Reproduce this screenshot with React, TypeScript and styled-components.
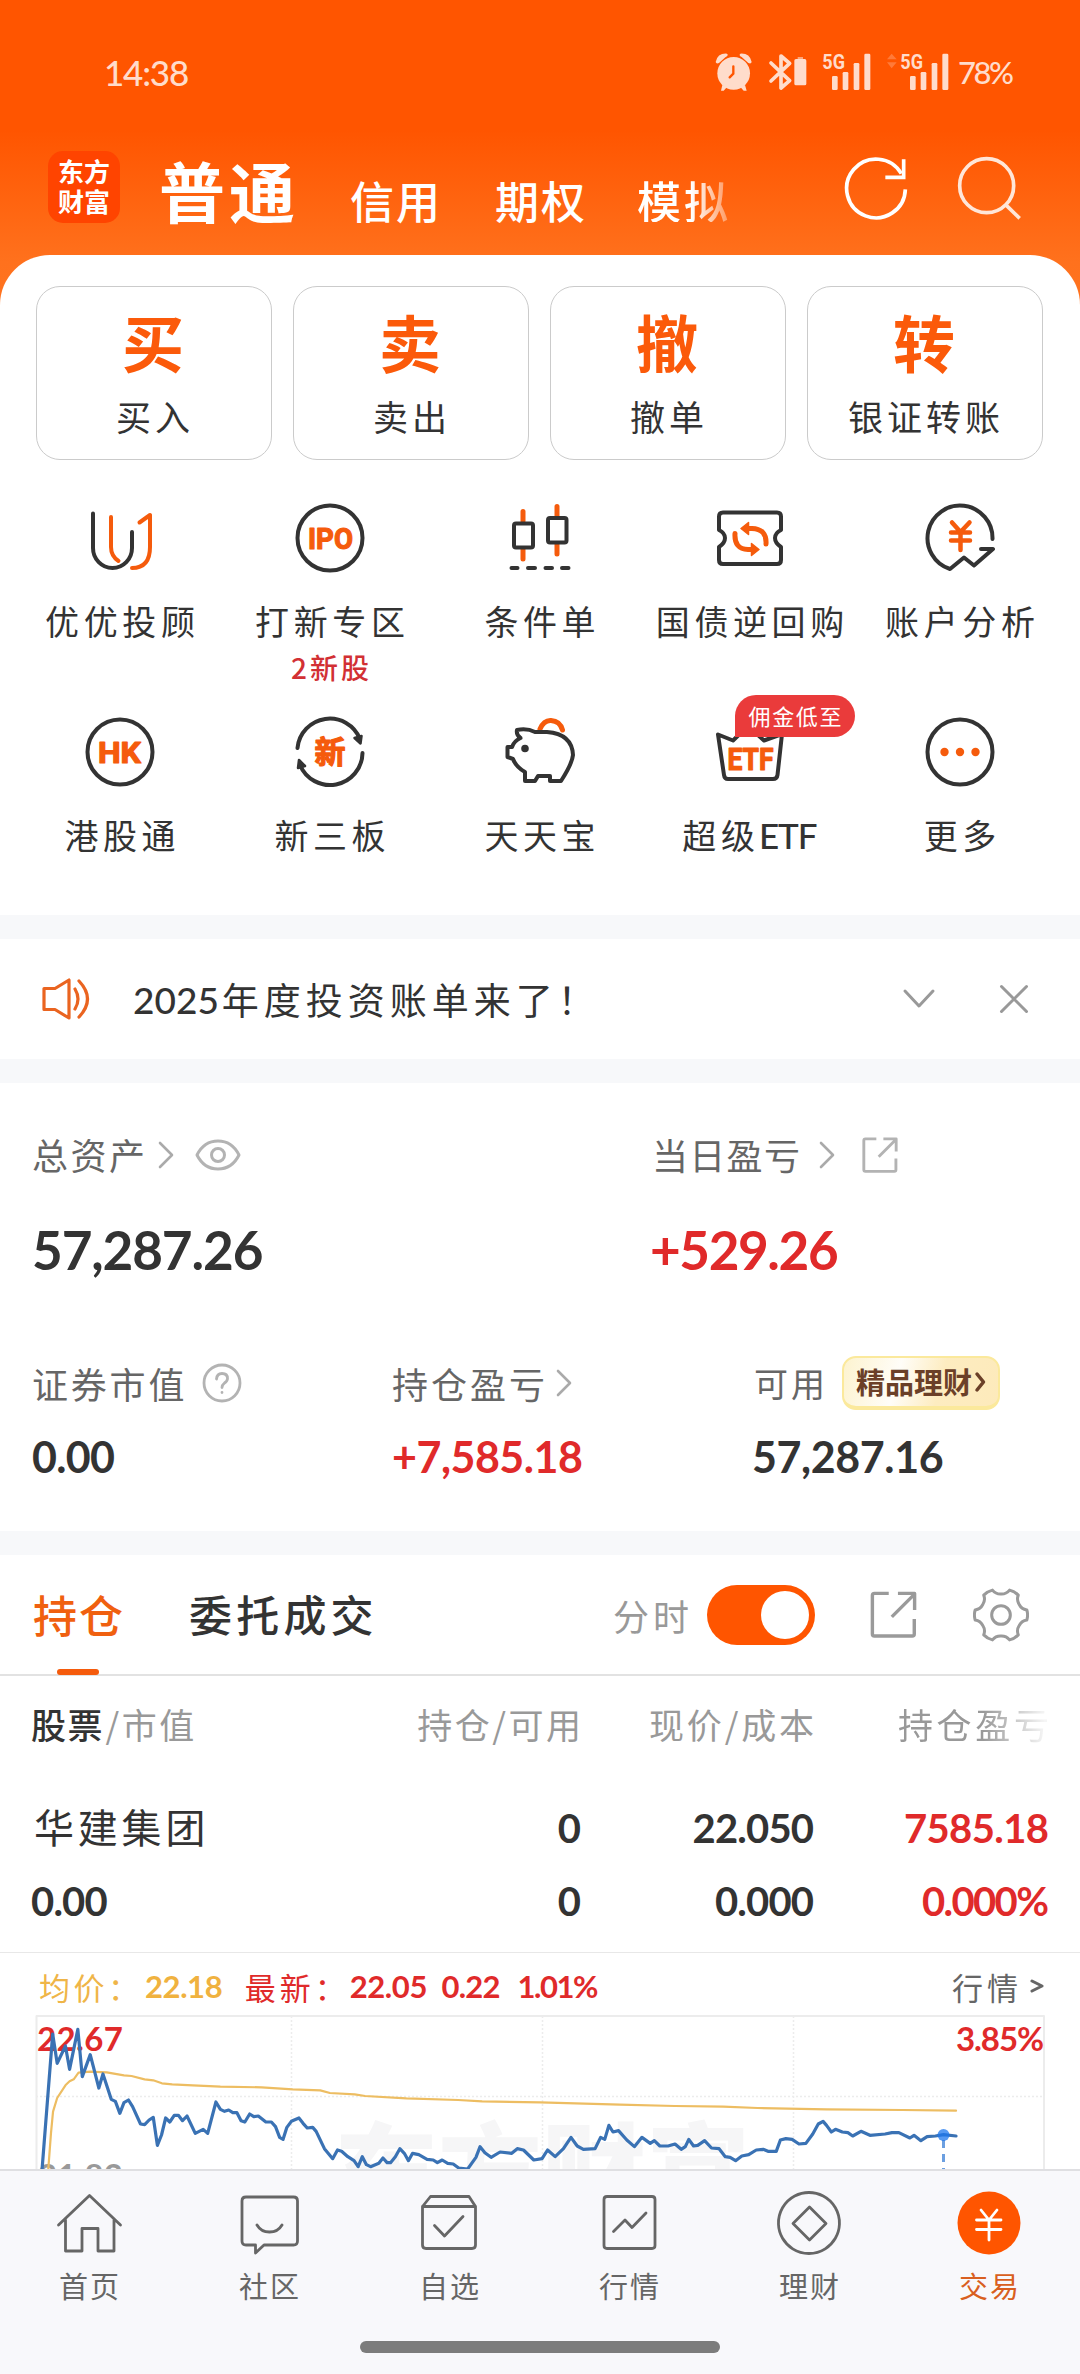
import React from "react";
import styled, { createGlobalStyle, css } from "styled-components";

const CJK = `"Noto Sans CJK SC", sans-serif`;
const NUM = `Lato, "Noto Sans CJK SC", sans-serif`;
const ORANGE = "#ff5500";
const ICON_ORANGE = "#f55b0c";
const INK = "#333333";
const RED = "#e02a2a";

const GlobalStyle = createGlobalStyle`
  * { box-sizing: border-box; }
  body { margin: 0; background: #fff; }
`;

const Page = styled.div`
  width: 1080px;
  height: 2374px;
  overflow: hidden;
  display: flex;
  flex-direction: column;
  font-family: ${CJK};
  color: ${INK};
  background: linear-gradient(180deg, #ff5500 0, #ff5500 130px, #ff711d 262px, #ff7420 320px) no-repeat;
`;

interface TextProps {
  $size: number;
  $gap?: number;
  $color?: string;
  $weight?: number;
  $dy?: number;
}

const textBase = css<TextProps>`
  display: inline-block;
  white-space: nowrap;
  line-height: 1;
  font-size: ${(p) => p.$size}px;
  letter-spacing: ${(p) => p.$gap ?? 0}px;
  margin-right: ${(p) => -(p.$gap ?? 0)}px;
  color: ${(p) => p.$color ?? INK};
  padding-bottom: ${(p) => p.$dy ?? 0}px;
`;

const Label = styled.span<TextProps>`
  ${textBase}
  font-family: ${CJK};
  font-weight: ${(p) => p.$weight ?? 400};
`;

const Num = styled.span<TextProps>`
  ${textBase}
  font-family: ${NUM};
  font-weight: ${(p) => p.$weight ?? 700};
`;

/* ---------- header ---------- */

const StatusBar = styled.div`
  height: 144px;
  flex: none;
  display: flex;
  align-items: center;
  justify-content: space-between;
  padding: 0 66px 0 104px;
`;

const StatusRight = styled.div`
  display: flex;
  align-items: center;
  gap: 9px;
`;

const NavBar = styled.div`
  height: 111px;
  flex: none;
  display: flex;
  align-items: flex-start;
  padding: 7px 0 0 48px;
`;

const Logo = styled.div`
  width: 72px;
  height: 72px;
  border-radius: 15px;
  background: #ff4400;
  display: flex;
  flex-direction: column;
  align-items: center;
  justify-content: center;
  gap: 4px;
  padding-bottom: 3px;
`;

const NavTab = styled.div<{ $left: number; $top: number; $fade?: boolean }>`
  margin-left: ${(p) => p.$left}px;
  margin-top: ${(p) => p.$top}px;
  display: flex;
  ${(p) => p.$fade && css`mask-image: linear-gradient(90deg, #000 60%, rgba(0,0,0,.35) 100%);`}
`;

const NavIcons = styled.div`
  display: flex;
  gap: 49px;
  margin-left: auto;
  padding: 5px 59px 0 0;
`;

/* ---------- white sheet with shortcuts ---------- */

const Sheet = styled.div`
  flex: none;
  height: 660px;
  background: #fff;
  border-radius: 50px 50px 0 0;
  padding-top: 31px;
`;

const Cards = styled.div`
  display: grid;
  grid-template-columns: repeat(4, 1fr);
  gap: 21px;
  padding: 0 37px 0 36px;
`;

const Card = styled.div`
  height: 174px;
  border: 1.5px solid #cbcbcb;
  border-radius: 24px;
  display: flex;
  flex-direction: column;
  align-items: center;
  padding: 23px 2px 0 0;
  gap: 26px;
`;

const Shortcuts = styled.div`
  margin-top: 42px;
  padding: 0 15px;
  display: grid;
  grid-template-columns: repeat(5, 210px);
  grid-auto-rows: 214px;
`;

const Shortcut = styled.div`
  position: relative;
  display: flex;
  flex-direction: column;
  align-items: center;
`;

const ShortcutName = styled.div`
  margin-top: 27px;
  height: 40px;
  display: flex;
  align-items: center;
`;

const ShortcutNote = styled.div`
  margin-top: 11px;
  height: 30px;
  display: flex;
  align-items: center;
`;

const Badge = styled.div`
  position: absolute;
  left: 90px;
  top: -21px;
  width: 120px;
  height: 42px;
  border-radius: 21px 21px 21px 0;
  background: #ea3b3b;
  display: flex;
  align-items: center;
  justify-content: center;
`;

const Divider = styled.div`
  height: 24px;
  flex: none;
  background: #f7f8fa;
`;

/* ---------- notice ---------- */

const Notice = styled.div`
  height: 120px;
  flex: none;
  background: #fff;
  display: flex;
  align-items: center;
  padding: 0 51px 0 41px;
`;

const NoticeText = styled.div`
  display: flex;
  align-items: center;
  gap: 3px;
  margin-left: 42px;
  flex: 1;
`;

/* ---------- assets ---------- */

const Assets = styled.div`
  height: 448px;
  flex: none;
  background: #fff;
  padding: 52px 0 0 32px;
`;

const AssetGrid = styled.div<{ $cols: string; $top?: number }>`
  display: grid;
  grid-template-columns: ${(p) => p.$cols};
  margin-top: ${(p) => p.$top ?? 0}px;
`;

const AssetHead = styled.div`
  height: 40px;
  display: flex;
  align-items: center;
`;

const AssetValue = styled.div<{ $top: number; $height: number }>`
  margin-top: ${(p) => p.$top}px;
  height: ${(p) => p.$height}px;
  display: flex;
  align-items: center;
`;

const Promo = styled.div`
  margin-left: 17px;
  width: 158px;
  height: 54px;
  border-radius: 14px;
  border: 2px solid #fbe99c;
  border-bottom-width: 4px;
  background: linear-gradient(105deg, #fdf3cf 0, #fffdf8 35%, #fdecc0 62%, #fdeabb 100%);
  display: flex;
  align-items: center;
  justify-content: center;
  gap: 2px;
`;

/* ---------- positions ---------- */

const PositionTabs = styled.div`
  height: 121px;
  flex: none;
  background: #fff;
  border-bottom: 2px solid #e2e2e2;
  display: flex;
  align-items: center;
  padding: 0 51px 0 33px;
`;

const PositionTab = styled.div<{ $active?: boolean }>`
  height: 120px;
  display: flex;
  flex-direction: column;
  align-items: center;
  padding-top: 37px;
  margin-right: 66px;
  &::after {
    content: "";
    margin-top: auto;
    width: 42px;
    height: 6px;
    border-radius: 3px;
    background: ${(p) => (p.$active ? "#f55b0c" : "transparent")};
  }
`;

const TabTools = styled.div`
  margin-left: auto;
  display: flex;
  align-items: center;
`;

const Toggle = styled.div`
  width: 108px;
  height: 60px;
  margin: 0 55px 0 18px;
  border-radius: 30px;
  background: ${ORANGE};
  padding: 6px;
  display: flex;
  justify-content: flex-end;
  &::after {
    content: "";
    width: 48px;
    height: 48px;
    border-radius: 50%;
    background: #fff;
  }
`;

const TableRow = styled.div<{ $height: number; $top?: number; $bottom?: number }>`
  flex: none;
  height: ${(p) => p.$height}px;
  padding: ${(p) => p.$top ?? 0}px 0 ${(p) => p.$bottom ?? 0}px 31px;
  background: #fff;
  display: grid;
  grid-template-columns: 300px 250px 233px 235px;
  align-items: center;
`;

const Cell = styled.div<{ $right?: boolean; $fade?: boolean }>`
  display: flex;
  align-items: center;
  justify-content: ${(p) => (p.$right ? "flex-end" : "flex-start")};
  ${(p) => p.$fade && css`mask-image: linear-gradient(90deg, #000 72%, rgba(0,0,0,.1) 98%);`}
`;

const Legend = styled.div`
  height: 62px;
  flex: none;
  background: #fff;
  border-top: 1.5px solid #e8e8e8;
  padding: 5px 36px 0 39px;
  display: flex;
  align-items: center;
`;

const Spacer = styled.div<{ $w?: number }>`
  width: ${(p) => (p.$w ? `${p.$w}px` : "auto")};
  flex: ${(p) => (p.$w ? "none" : "1")};
`;

const ChartBox = styled.div`
  height: 155px;
  flex: none;
  background: #fff;
  overflow: hidden;
`;

/* ---------- bottom bar ---------- */

const TabBar = styled.div`
  height: 205px;
  flex: none;
  background: #f8f8fb;
  border-top: 2px solid #dfdfe2;
  display: flex;
  flex-direction: column;
  align-items: center;
`;

const TabItems = styled.div`
  display: grid;
  grid-template-columns: repeat(6, 180px);
  height: 170px;
  width: 1080px;
`;

const TabItem = styled.div`
  display: flex;
  flex-direction: column;
  align-items: center;
  padding: 16px 2px 0 0;
  gap: 12px;
`;

const HomeHandle = styled.div`
  width: 360px;
  height: 12px;
  border-radius: 6px;
  background: #7c7c7c;
`;

/* ---------- drawings ---------- */

const Glyph = styled.svg<{ $w: number; $h: number }>`
  display: block;
  flex: none;
  width: ${(p) => p.$w}px;
  height: ${(p) => p.$h}px;
  fill: none;
  stroke-linecap: round;
  stroke-linejoin: round;
`;

const StatusIcons = () => (
  <Glyph $w={234} $h={42} viewBox="50 30 702 126">
    <g fill="#ffdccb">
      <circle cx="106" cy="97" r="49" />
      <path d="M52 63Q58 36 86 38Q92 42 82 48L62 66Q54 70 52 63zM160 63Q154 36 126 38Q120 42 130 48L150 66Q158 70 160 63z" />
      <path d="M72 132L68 149H76L86 138zM140 132L145 149H136L126 138z" />
      <rect x="288" y="54" width="36" height="79" rx="5" />
      <rect x="298" y="48" width="16" height="8" opacity=".6" />
      {[0, 234].map((dx) => (
        <g key={dx} transform={`translate(${dx} 0)`}>
          <rect x="401" y="105" width="17" height="42" rx="4" />
          <rect x="433" y="93" width="17" height="54" rx="4" />
          <rect x="466" y="66" width="17" height="81" rx="4" />
          <rect x="498" y="38" width="18" height="109" rx="4" />
          <text x="372" y="83" fontFamily="Roboto, sans-serif" fontWeight="700" fontSize="62" textLength="68" lengthAdjust="spacingAndGlyphs">5G</text>
        </g>
      ))}
      <path d="M566 55L580 38L595 55zM566 64H595L580 82z" opacity=".28" />
    </g>
    <path d="M105 76V98L94 109" stroke="#ff5500" strokeWidth="7" />
    <path d="M218 66L274 119L248 141V45L274 67L218 120" stroke="#ffdccb" strokeWidth="11" />
  </Glyph>
);

const RefreshIcon = () => (
  <Glyph $w={64} $h={64} viewBox="432 347 192 192" stroke="#fff" strokeWidth="11">
    <path d="M616 447A88 88 0 1 1 604 400" strokeLinecap="butt" />
    <path d="M611 357V411H556" strokeLinecap="butt" strokeLinejoin="miter" />
  </Glyph>
);

const SearchIcon = () => (
  <Glyph $w={64} $h={64} viewBox="772 343 192 192" stroke="#ffe6d8" strokeWidth="11">
    <circle cx="861" cy="432" r="81" />
    <path d="M917 488L960 530" strokeLinecap="butt" />
  </Glyph>
);

const Icon72 = ({ children }: { children: React.ReactNode }) => (
  <Glyph $w={72} $h={72} viewBox="0 0 72 72" stroke={INK} strokeWidth="4">
    {children}
  </Glyph>
);

const MarkText = ({ x, y, size, width, children }: { x: number; y: number; size: number; width: number; children: string }) => (
  <text
    x={x}
    y={y}
    fill={ICON_ORANGE}
    stroke={ICON_ORANGE}
    strokeWidth="1.2"
    fontFamily={`Roboto, ${CJK}`}
    fontWeight="700"
    fontSize={size}
    textLength={width}
    lengthAdjust="spacingAndGlyphs"
  >
    {children}
  </text>
);

const icons: Record<string, React.ReactNode> = {
  advisor: (
    <>
      <path d="M9 11.5V46A19.5 20 0 0 0 48 46V30" />
      <path d="M27 15V45Q27 54 34.5 59M55.5 20.5L66 13V45Q66 66 48 66" stroke={ICON_ORANGE} />
    </>
  ),
  ipo: (
    <>
      <circle cx="36" cy="36" r="32.5" />
      <MarkText x={14} y={46.5} size={30} width={45}>IPO</MarkText>
    </>
  ),
  condition: (
    <>
      <path d="M19 9.5V19M19 47V57M53 4.5V14M53 42V52" stroke={ICON_ORANGE} strokeWidth="5" />
      <rect x="10" y="21.5" width="19" height="24" rx="2" />
      <rect x="44" y="16" width="18.5" height="24.5" rx="2" />
      <path d="M7.5 66H13.5M24 66H31M41.5 66H48M58 66H64.5" />
    </>
  ),
  bond: (
    <>
      <path d="M9 10.5H63Q67 10.5 67 14.5V28Q61 31 61 36Q61 41 67 45V58Q67 62 63 62H9Q5 62 5 58V45Q11 41 11 36Q11 31 5 28V14.5Q5 10.5 9 10.5z" />
      <g stroke={ICON_ORANGE} strokeWidth="5">
        <path d="M33 26.5H38Q53 27 52 42M39 47.5H34Q20 47 21 31.5" />
        <path d="M34.5 20.500V32.5L27 26.5zM37.500 41.500V53.5L45 47.5z" fill={ICON_ORANGE} strokeWidth="1.500" />
      </g>
    </>
  ),
  analysis: (
    <>
      <path d="M68.5 37A32.5 32.5 0 1 0 26 67L40 55.5L50 63.5L69 47H57" />
      <path d="M28 20.5L36.5 30L45.5 20.5M27 30.5H46M27 38.5H46M36.500 30V48" stroke={ICON_ORANGE} strokeWidth="4.500" />
    </>
  ),
  hk: (
    <>
      <circle cx="36" cy="36" r="32.5" />
      <MarkText x={14} y={46.5} size={30} width={43}>HK</MarkText>
    </>
  ),
  board: (
    <>
      <path d="M3.5 32A32.5 32.5 0 0 1 66 23M68.5 37A32.5 32.5 0 0 1 6 49" />
      <path d="M60.5 22L66.5 27.5L67.5 20zM4 52L5 44L11 50z" fill={INK} strokeWidth="2.500" />
      <MarkText x={20.5} y={47} size={31} width={31}>新</MarkText>
    </>
  ),
  piggy: (
    <>
      <path d="M36 13Q40 4 47 4.5Q56 5 58.5 14" stroke={ICON_ORANGE} strokeWidth="5" />
      <path d="M13 14Q23 12 31 16H43Q68 18 69 39Q68 48 57 65H46V60H34L31 65H21V56Q12 51 9 43L3.500 41V31H8Q10 25 16.500 22Q12 19 13 14z" fill="#fff" />
      <circle cx="21" cy="32.5" r="1.8" fill={INK} />
    </>
  ),
  etf: (
    <>
      <path d="M4 18.5L19 24.5L34 10L50 24.5L68 18L63.5 59Q63 63 59 63H14Q10.5 63 10 59L4 18.500z" />
      <MarkText x={13.5} y={54} size={31} width={46}>ETF</MarkText>
    </>
  ),
  more: (
    <>
      <circle cx="36" cy="36" r="32.5" />
      <g fill={ICON_ORANGE} stroke="none">
        <circle cx="20.5" cy="36" r="4.2" />
        <circle cx="36" cy="36" r="4.2" />
        <circle cx="51.5" cy="36" r="4.2" />
      </g>
    </>
  ),
};

const shortcuts = [
  { name: "优优投顾", icon: "advisor" },
  { name: "打新专区", icon: "ipo", note: "2新股" },
  { name: "条件单", icon: "condition" },
  { name: "国债逆回购", icon: "bond" },
  { name: "账户分析", icon: "analysis" },
  { name: "港股通", icon: "hk" },
  { name: "新三板", icon: "board" },
  { name: "天天宝", icon: "piggy" },
  { name: "超级", latin: "ETF", icon: "etf", badge: "佣金低至" },
  { name: "更多", icon: "more" },
];

const Chevron = () => (
  <Glyph $w={18} $h={28} viewBox="0 0 18 28" stroke="#aaa" strokeWidth="2.6">
    <path d="M3 2L15 14L3 26" />
  </Glyph>
);

const ExportIcon = ({ size, color, stroke }: { size: number; color: string; stroke: number }) => (
  <Glyph $w={size} $h={size} viewBox="814 66 136 138" stroke={color} strokeWidth={stroke}>
    <path d="M868 73H826Q820 73 820 79V192Q820 198 826 198H937Q943 198 943 192V148M895 73H944V122M877 142L943 76" strokeLinecap="butt" />
  </Glyph>
);

const gearPath = () => {
  const at = (deg: number, r: number) => {
    const a = (deg * Math.PI) / 180;
    return `${(80 + r * Math.cos(a)).toFixed(1)} ${(80 + r * Math.sin(a)).toFixed(1)}`;
  };
  let d = `M${at(-11, 79)}`;
  for (let k = 0; k < 6; k++) {
    const a = k * 60;
    d += `Q${at(a, 82)} ${at(a + 11, 79)}Q${at(a + 16, 64)} ${at(a + 30, 63)}Q${at(a + 44, 64)} ${at(a + 49, 79)}`;
  }
  return d + "z";
};

const tabs = [
  { name: "首页", art: <path d="M5.5 38L36.5 8.5L67.5 38M12.5 33V64H29V41.5H45V64H61V33" /> },
  {
    name: "社区",
    art: <path d="M13 10H60.5Q64.5 10 64.5 14V54Q64.5 58 60.5 58H31L22.5 66V58H13Q9 58 9 54V14Q9 10 13 10zM24 38Q28 45 36.5 45Q45 45 49 38" />,
  },
  {
    name: "自选",
    art: <path d="M17.5 9.5H56L62.5 19.5V58Q62.5 61.5 59 61.5H13Q9.5 61.5 9.5 58V19.5zM9.5 19.5H62.5M21.5 38.5L31.5 49L50 29.5" />,
  },
  { name: "行情", art: <path d="M14 9.5H59Q62 9.5 62 12.5V58.5Q62 61.5 59 61.5H14Q11 61.5 11 58.5V12.5Q11 9.5 14 9.5zM20.5 44.5L32 33L39 40.5L53 26" /> },
  { name: "理财", art: <path d="M36 5.5A30.5 30.5 0 1 1 35.9 5.5zM36.500 20L53 36.5L36.5 53L20 36.5z" /> },
  {
    name: "交易",
    active: true,
    art: (
      <>
        <circle cx="36" cy="36" r="31.5" fill={ORANGE} stroke="none" />
        <path d="M28 23L36 33L44 23M23.5 33H48M23.5 42.5H48M36 33V53" stroke="#fff" />
      </>
    ),
  },
];

/* Intraday samples on the plot's own grid: 3136 units wide, 222 to 687 top to bottom. */
const price =
  "122,690 153,282 166,370 190,318 202,388 226,268 239,410 262,344 287,444 299,402 323,478 335,484 348,520 360,488 373,480 385,500 408,552 420,554 433,540 445,532 457,616 469,585 481,534 493,546 506,526 518,526 530,542 543,528 567,580 590,568 603,580 627,486 640,508 652,514 664,510 676,518 688,518 700,542 711,546 725,522 737,530 750,528 772,546 788,546 800,560 812,592 822,598 833,562 846,544 868,534 880,550 892,564 908,562 918,574 942,626 966,656 980,630 992,634 1010,650 1028,662 1040,680 1052,650 1064,674 1076,680 1100,670 1112,654 1124,668 1134,668 1148,650 1161,626 1174,640 1186,662 1198,640 1216,644 1240,658 1258,660 1270,668 1284,660 1300,670 1316,672 1332,684 1358,687 1382,652 1394,620 1408,638 1426,652 1452,636 1486,640 1502,626 1520,630 1550,660 1574,656 1590,630 1612,650 1636,626 1658,592 1676,618 1694,628 1728,626 1744,592 1756,598 1768,556 1780,576 1796,572 1820,600 1842,620 1864,592 1888,610 1900,602 1916,618 1940,618 1960,612 1978,628 1990,620 2000,598 2014,618 2026,616 2046,602 2066,624 2088,626 2106,650 2120,652 2136,662 2154,648 2174,644 2196,630 2216,628 2230,634 2254,634 2266,600 2282,596 2300,598 2320,612 2340,610 2360,582 2376,552 2390,544 2400,556 2414,576 2426,568 2446,576 2462,578 2476,588 2500,574 2526,586 2570,582 2590,578 2610,578 2642,594 2654,586 2674,602 2692,590 2716,588 2740,584 2776,588";
const average =
  "140,690 148,580 154,515 166,474 190,436 202,424 214,418 228,398 262,395 310,397 360,406 382,408 420,418 445,421 470,430 500,433 560,436 640,440 760,442 850,448 930,451 958,459 1030,463 1060,468 1180,475 1330,480 1400,484 1568,487 1800,494 1960,498 2100,500 2200,504 2400,508 2620,510 2776,512";

const Chart = () => (
  <Glyph $w={1080} $h={155} viewBox="0 0 1080 155">
    <text x="334" y="197" fill="#f6f6f7" fontFamily={CJK} fontWeight="900" fontSize="104">东方财富</text>
    <g stroke="#ececec" strokeLinecap="butt">
      <path d="M36.5 155V2H1044V155" strokeWidth="2" />
      <path d="M291.5 2V155M542.5 2V155M793.5 2V155M36 82.500H1044" strokeDasharray="2 2" strokeWidth="1.500" />
    </g>
    <g fontFamily={NUM} fontWeight="700" fontSize="33">
      <text x="37" y="37" fill={RED} textLength="86">22.67</text>
      <text x="1044" y="37" fill={RED} textLength="88" textAnchor="end">3.85%</text>
      <text x="38" y="174" fill="#999" textLength="85">21.83</text>
    </g>
    <svg x="0" y="0" width="1080" height="155" viewBox="0 222 3136 465" preserveAspectRatio="none">
      <polyline points={average} stroke="#edbd62" strokeWidth="2.2" vectorEffect="non-scaling-stroke" />
      <polyline points={price} stroke="#3a72b4" strokeWidth="3.2" vectorEffect="non-scaling-stroke" />
    </svg>
    <path d="M943.5 126V155" stroke="#6c9fe0" strokeWidth="3" strokeDasharray="8 6" strokeLinecap="butt" />
    <circle cx="943.5" cy="121" r="6" fill="#1f78ee" fillOpacity=".75" />
  </Glyph>
);

export default function App() {
  return (
    <>
      <GlobalStyle />
      <Page>
        <StatusBar>
          <Num $size={35} $gap={-1.2} $color="#ffdccb" $weight={500}>14:38</Num>
          <StatusRight>
            <StatusIcons />
            <Num $size={31} $gap={-2.5} $color="#ffdccb" $weight={500}>78%</Num>
          </StatusRight>
        </StatusBar>
        <NavBar>
          <Logo>
            <Label $size={26} $color="#fff" $weight={700}>东方</Label>
            <Label $size={26} $color="#fff" $weight={700}>财富</Label>
          </Logo>
          <NavTab $left={39} $top={5}><Label $size={66} $gap={4} $color="#fff" $weight={700}>普通</Label></NavTab>
          <NavTab $left={55} $top={27}><Label $size={44} $gap={2} $color="#fff" $weight={500}>信用</Label></NavTab>
          <NavTab $left={55} $top={27}><Label $size={44} $gap={2} $color="#fff" $weight={500}>期权</Label></NavTab>
          <NavTab $left={52} $top={27} $fade><Label $size={44} $gap={3} $color="#fff" $weight={500}>模拟</Label></NavTab>
          <NavIcons><RefreshIcon /><SearchIcon /></NavIcons>
        </NavBar>

        <Sheet>
          <Cards>
            {[["买", "买入"], ["卖", "卖出"], ["撤", "撤单"], ["转", "银证转账"]].map(([big, small]) => (
              <Card key={big}>
                <Label $size={62} $color="#fb5a0a" $weight={700}>{big}</Label>
                <Label $size={35} $gap={4}>{small}</Label>
              </Card>
            ))}
          </Cards>
          <Shortcuts>
            {shortcuts.map((s) => (
              <Shortcut key={s.name}>
                <Icon72>{icons[s.icon]}</Icon72>
                <ShortcutName>
                  <Label $size={34} $gap={4.6}>{s.name}</Label>
                  {s.latin && <><Spacer $w={4} /><Num $size={35} $gap={-1} $weight={500}>{s.latin}</Num></>}
                </ShortcutName>
                {s.note && <ShortcutNote><Label $size={28} $gap={3} $color="#d23034" $weight={500}>{s.note}</Label></ShortcutNote>}
                {s.badge && <Badge><Label $size={22} $gap={1.6} $color="#fff" $dy={2}>{s.badge}</Label></Badge>}
              </Shortcut>
            ))}
          </Shortcuts>
        </Sheet>

        <Divider />
        <Notice>
          <Glyph $w={50} $h={44} viewBox="0 0 50 44" stroke="#ea6420" strokeWidth="3.2">
            <path d="M3 11.5H14L28 3V41L14 32.5H3zM34 12Q40 22 34 32M38 4Q55 22 38 40" />
          </Glyph>
          <NoticeText>
            <Num $size={37} $gap={0} $weight={500}>2025</Num>
            <Label $size={37} $gap={5}>年度投资账单来了！</Label>
          </NoticeText>
          <Glyph $w={34} $h={22} viewBox="0 0 34 22" stroke="#999" strokeWidth="3"><path d="M3 3L17 18L31 3" /></Glyph>
          <Spacer $w={63} />
          <Glyph $w={30} $h={30} viewBox="0 0 30 30" stroke="#999" strokeWidth="3"><path d="M2.5 2.5L27.5 27.5M27.5 2.5L2.5 27.5" /></Glyph>
        </Notice>
        <Divider />

        <Assets>
          <AssetGrid $cols="618px 1fr">
            <div>
              <AssetHead>
                <Label $size={36} $gap={2.5} $color="#666" $dy={2}>总资产</Label>
                <Spacer $w={12} /><Chevron /><Spacer $w={20} />
                <Glyph $w={46} $h={32} viewBox="0 0 46 32" stroke="#b3b3b3" strokeWidth="3">
                  <path d="M2 16Q9 2 23 2Q37 2 44 16Q37 30 23 30Q9 30 2 16z" /><circle cx="23" cy="16" r="6.5" />
                </Glyph>
              </AssetHead>
              <AssetValue $top={54} $height={40}><Num $size={53} $gap={-1.1}>57,287.26</Num></AssetValue>
            </div>
            <div>
              <AssetHead>
                <Spacer $w={2} />
                <Label $size={36} $gap={1.3} $color="#666" $dy={2}>当日盈亏</Label>
                <Spacer $w={18} /><Chevron /><Spacer $w={26} />
                <ExportIcon size={36} color="#b3b3b3" stroke={11} />
              </AssetHead>
              <AssetValue $top={54} $height={40}><Num $size={53} $gap={-1.4} $color={RED}>+529.26</Num></AssetValue>
            </div>
          </AssetGrid>
          <AssetGrid $cols="360px 360px 1fr" $top={94}>
            <div>
              <AssetHead>
                <Label $size={36} $gap={2.8} $color="#666">证券市值</Label>
                <Spacer $w={18} />
                <Glyph $w={40} $h={40} viewBox="0 0 40 40" stroke="#b3b3b3" strokeWidth="2.8">
                  <circle cx="20" cy="20" r="18" />
                  <path d="M14.5 16Q15 10.5 20 10.5Q25.500 10.500 25.5 15.5Q25.5 18 22.5 20Q20 22 20 24.5M20 29.5V29.600" />
                </Glyph>
              </AssetHead>
              <AssetValue $top={35} $height={36}><Num $size={43} $gap={-0.7}>0.00</Num></AssetValue>
            </div>
            <div>
              <AssetHead>
                <Label $size={36} $gap={3} $color="#666">持仓盈亏</Label>
                <Spacer $w={10} /><Chevron />
              </AssetHead>
              <AssetValue $top={35} $height={36}><Num $size={43} $gap={-0.5} $color={RED}>+7,585.18</Num></AssetValue>
            </div>
            <div>
              <AssetHead>
                <Spacer $w={2} />
                <Label $size={34} $gap={3} $color="#666">可用</Label>
                <Promo>
                  <Label $size={29} $weight={700} $color="#6b4028" $dy={2}>精品理财</Label>
                  <Glyph $w={12} $h={22} viewBox="0 0 12 22" stroke="#6b4028" strokeWidth="3.5"><path d="M3 3L9.5 11L3 19" /></Glyph>
                </Promo>
              </AssetHead>
              <AssetValue $top={35} $height={36}><Num $size={43} $gap={-0.4}>57,287.16</Num></AssetValue>
            </div>
          </AssetGrid>
        </Assets>
        <Divider />

        <PositionTabs>
          <PositionTab $active><Label $size={44} $gap={2} $color="#f0600f" $weight={500}>持仓</Label></PositionTab>
          <PositionTab><Label $size={43} $gap={4.2} $weight={500}>委托成交</Label></PositionTab>
          <TabTools>
            <Label $size={36} $gap={4} $color="#999">分时</Label>
            <Toggle />
            <ExportIcon size={47} color="#9a9a9a" stroke={10} />
            <Spacer $w={56} />
            <Glyph $w={56} $h={56} viewBox="-4 -4 168 168" stroke="#9a9a9a" strokeWidth="9">
              <path d={gearPath()} /><circle cx="80" cy="80" r="28" />
            </Glyph>
          </TabTools>
        </PositionTabs>

        <TableRow $height={97}>
          <Cell><Label $size={35} $gap={1.5} $weight={500} $dy={2}>股票</Label><Spacer $w={3} /><Label $size={35} $gap={2.5} $color="#999" $dy={2}>/市值</Label></Cell>
          <Cell $right><Label $size={35} $gap={2.5} $color="#999" $dy={2}>持仓/可用</Label></Cell>
          <Cell $right><Label $size={35} $gap={2.8} $color="#999" $dy={2}>现价/成本</Label></Cell>
          <Cell $right $fade><Label $size={35} $gap={3.7} $color="#999" $dy={2}>持仓盈亏</Label></Cell>
        </TableRow>
        <TableRow $height={98} $top={12}>
          <Cell><Spacer $w={3} /><Label $size={40} $gap={3.8} $dy={5}>华建集团</Label></Cell>
          <Cell $right><Num $size={40}>0</Num></Cell>
          <Cell $right><Num $size={40} $gap={-0.8}>22.050</Num></Cell>
          <Cell $right><Num $size={40} $gap={-0.6} $color={RED}>7585.18</Num></Cell>
        </TableRow>
        <TableRow $height={81} $bottom={21}>
          <Cell><Num $size={40} $gap={-0.8}>0.00</Num></Cell>
          <Cell $right><Num $size={40}>0</Num></Cell>
          <Cell $right><Num $size={40} $gap={-0.8}>0.000</Num></Cell>
          <Cell $right><Num $size={40} $gap={-1.6} $color={RED}>0.000%</Num></Cell>
        </TableRow>

        <Legend>
          <Label $size={31} $gap={3.5} $color="#efb548">均价：</Label>
          <Spacer $w={6} />
          <Num $size={31} $gap={-0.4} $color="#f0b23f">22.18</Num>
          <Spacer $w={22} />
          <Label $size={31} $gap={4} $color={RED}>最新：</Label>
          <Spacer $w={4} />
          <Num $size={31} $gap={-0.4} $color={RED}>22.05</Num>
          <Spacer $w={14} />
          <Num $size={31} $gap={-0.7} $color={RED}>0.22</Num>
          <Spacer $w={17} />
          <Num $size={31} $gap={-1.5} $color={RED}>1.01%</Num>
          <Spacer />
          <Label $size={31} $gap={4} $color="#666">行情</Label>
          <Spacer $w={12} />
          <Glyph $w={14} $h={14} viewBox="0 0 14 14" stroke="#666" strokeWidth="3"><path d="M2 2L12 7L2 12" /></Glyph>
        </Legend>
        <ChartBox><Chart /></ChartBox>

        <TabBar>
          <TabItems>
            {tabs.map((t) => (
              <TabItem key={t.name}>
                <Glyph $w={72} $h={72} viewBox="0 0 72 72" stroke="#666" strokeWidth="2.8">{t.art}</Glyph>
                <Label $size={29} $gap={2} $color={t.active ? "#d95f20" : "#666"}>{t.name}</Label>
              </TabItem>
            ))}
          </TabItems>
          <HomeHandle />
        </TabBar>
      </Page>
    </>
  );
}
